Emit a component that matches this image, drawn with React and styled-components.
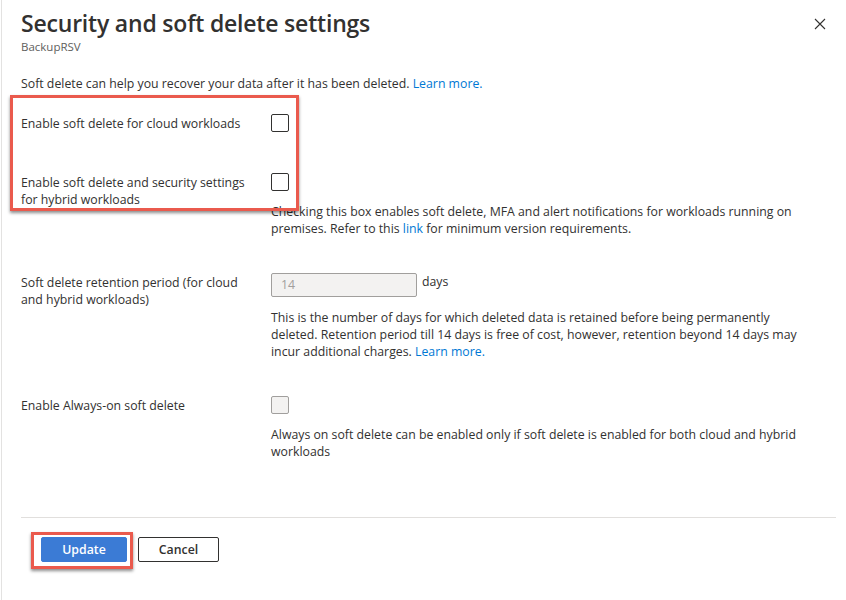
import React from 'react';
import styled, { createGlobalStyle } from 'styled-components';

const GlobalStyle = createGlobalStyle`
  html, body {
    margin: 0;
    padding: 0;
    background: #fff;
  }
  body {
    font-family: 'Open Sans', 'Noto Sans', sans-serif;
    color: #323130;
  }
`;

const Panel = styled.div`
  width: 845px;
  height: 600px;
  margin-left: 1px;
  box-sizing: border-box;
  border-left: 1px solid #e3e2e1;
  padding: 8px 10px 0 19px;
  display: flex;
  flex-direction: column;
`;

const Header = styled.div`
  display: flex;
  justify-content: space-between;
  align-items: flex-start;
`;

const Title = styled.h1`
  margin: 0;
  font-size: 23px;
  line-height: 30px;
  font-weight: 600;
  letter-spacing: -0.2px;
  color: #323130;
`;

const Subtitle = styled.div`
  margin-top: 1px;
  font-size: 11.5px;
  line-height: 16px;
  color: #605e5c;
`;

const CloseButton = styled.button`
  width: 24px;
  height: 24px;
  margin: 4px 4px 0 0;
  padding: 0;
  border: none;
  background: transparent;
  display: flex;
  align-items: center;
  justify-content: center;
  cursor: pointer;
`;

const Text = styled.p`
  margin: 0;
  font-size: 12.3px;
  line-height: 17px;
  color: #323130;
`;

const Intro = styled(Text)`
  margin-top: 19.5px;
`;

const Link = styled.a`
  color: #0078d4;
  text-decoration: none;
`;

const Group = styled.div`
  position: relative;
  margin-top: 22.5px;
`;

const Highlight = styled.div`
  position: absolute;
  top: ${p => p.$top}px;
  left: ${p => p.$left}px;
  right: ${p => p.$right}px;
  bottom: ${p => p.$bottom}px;
  border: 3px solid #ea5a4d;
  box-shadow: 0 2px 3px rgba(0, 0, 0, 0.45);
  pointer-events: none;
`;

const Row = styled.div`
  display: grid;
  grid-template-columns: 250px 1fr;
  margin-top: ${p => p.$space || 0}px;
`;

const Label = styled(Text)`
  padding-top: 0.5px;
  padding-right: 20px;
`;

const Control = styled.div`
  display: flex;
  flex-direction: column;
  align-items: flex-start;
`;

const Checkbox = styled.span`
  display: block;
  width: 18px;
  height: 18px;
  box-sizing: border-box;
  border-radius: 2px;
  border: 1px solid ${p => (p.$disabled ? '#a19f9d' : '#323130')};
  background: ${p => (p.$disabled ? '#f3f2f1' : '#fff')};
`;

const Help = styled(Text)`
  margin-top: 11.5px;
  max-width: 540px;
`;

const InputLine = styled.div`
  display: flex;
  align-items: flex-start;
  gap: 5px;
`;

const NumberInput = styled.div`
  width: 146px;
  height: 24px;
  box-sizing: border-box;
  border: 1px solid #a19f9d;
  border-radius: 2px;
  background: #f3f2f1;
  color: #a19f9d;
  font-size: 12.3px;
  line-height: 22px;
  padding-left: 9px;
`;

const Footer = styled.div`
  margin-top: auto;
  border-top: 1px solid #e1dfdd;
  padding: 19px 0 38px 20px;
  display: flex;
  gap: 11px;
`;

const ButtonWrap = styled.div`
  position: relative;
`;

const Button = styled.button`
  height: 25px;
  width: ${p => (p.$primary ? 86 : 81)}px;
  box-sizing: border-box;
  border-radius: 2px;
  border: 1px solid ${p => (p.$primary ? '#3b7bd5' : '#323130')};
  background: ${p => (p.$primary ? '#3b7bd5' : '#fff')};
  color: ${p => (p.$primary ? '#fff' : '#323130')};
  font-family: 'Open Sans', 'Noto Sans', sans-serif;
  font-size: 12.3px;
  font-weight: 600;
  padding: 0;
  cursor: pointer;
`;

const App = () => (
  <>
    <GlobalStyle />
    <Panel>
      <Header>
        <div>
          <Title>Security and soft delete settings</Title>
          <Subtitle>BackupRSV</Subtitle>
        </div>
        <CloseButton aria-label="Close">
          <svg width="12" height="12" viewBox="0 0 12 12">
            <path d="M1 1 L11 11 M11 1 L1 11" stroke="#323130" strokeWidth="1.1" />
          </svg>
        </CloseButton>
      </Header>

      <Intro>
        Soft delete can help you recover your data after it has been deleted. <Link href="#">Learn more.</Link>
      </Intro>

      <Group>
        <Row>
          <Label>Enable soft delete for cloud workloads</Label>
          <Control>
            <Checkbox />
          </Control>
        </Row>
        <Row $space={41}>
          <Label>Enable soft delete and security settings for hybrid workloads</Label>
          <Control>
            <Checkbox />
            <Help>
              Checking this box enables soft delete, MFA and alert notifications for workloads running on premises.
              Refer to this <Link href="#">link</Link> for minimum version requirements.
            </Help>
          </Control>
        </Row>
        <Highlight $top={-19} $left={-11} $right={537} $bottom={26} />
      </Group>

      <Row $space={36.5}>
        <Label>Soft delete retention period (for cloud and hybrid workloads)</Label>
        <Control>
          <InputLine>
            <NumberInput>14</NumberInput>
            <Text>days</Text>
          </InputLine>
          <Help>
            This is the number of days for which deleted data is retained before being permanently deleted.
            Retention period till 14 days is free of cost, however, retention beyond 14 days may incur additional
            charges. <Link href="#">Learn more.</Link>
          </Help>
        </Control>
      </Row>

      <Row $space={36.5}>
        <Label>Enable Always-on soft delete</Label>
        <Control>
          <Checkbox $disabled />
          <Help>
            Always on soft delete can be enabled only if soft delete is enabled for both cloud and hybrid workloads
          </Help>
        </Control>
      </Row>

      <Footer>
        <ButtonWrap>
          <Button $primary>Update</Button>
          <Highlight $top={-5} $left={-10} $right={-6} $bottom={-7} />
        </ButtonWrap>
        <Button>Cancel</Button>
      </Footer>
    </Panel>
  </>
);

export default App;
